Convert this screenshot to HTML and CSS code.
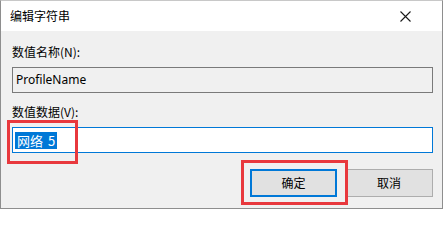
FILE: index.html
```html
<!DOCTYPE html>
<html lang="zh-CN">
<head>
<meta charset="utf-8">
<title>编辑字符串</title>
<link rel="stylesheet" href="styles.css">
</head>
<body>
<div class="window">
  <div class="titlebar">
    <span class="title">编辑字符串</span>
    <span class="close" aria-label="关闭">
      <svg width="11" height="11" viewBox="0 0 11 11"><path d="M0.5 0.5 L10.5 10.5 M10.5 0.5 L0.5 10.5" stroke="#1a1a1a" stroke-width="1.1" fill="none"/></svg>
    </span>
  </div>
  <div class="content">
    <div class="label label-first">数值名称(N):</div>
    <div class="field field-readonly"><span class="value">ProfileName</span></div>
    <div class="label label-second">数值数据(V):</div>
    <div class="field field-focus"><span class="selected">网络&nbsp;5</span></div>
    <div class="buttons">
      <div class="btn btn-default">确定</div>
      <div class="btn">取消</div>
    </div>
  </div>
  <div class="mark mark-field"></div>
  <div class="mark mark-button"></div>
</div>
</body>
</html>
```
FILE: styles.css
```css
html, body {
  margin: 0;
  padding: 0;
  background: #ffffff;
}
body {
  width: 443px;
  height: 211px;
  overflow: hidden;
  font-family: "Noto Sans CJK SC", "Noto Sans", sans-serif;
  font-size: 12px;
  color: #000;
}
.window {
  position: relative;
  box-sizing: border-box;
  width: 443px;
  height: 209px;
  border: 1px solid #8e8e8e;
  border-top-color: #c8c8c8;
  background: #f0f0f0;
  display: flex;
  flex-direction: column;
}
.titlebar {
  height: 30px;
  background: #ffffff;
  display: flex;
  align-items: center;
  justify-content: space-between;
  padding: 0 31px 0 9px;
}
.title {
  font-size: 12px;
  line-height: 16px;
}
.close {
  display: flex;
  width: 11px;
  height: 11px;
}
.content {
  flex: 1;
  display: flex;
  flex-direction: column;
  padding: 0 9px 0 11px;
}
.label {
  line-height: 16px;
  height: 16px;
}
.label-first { margin-top: 13px; }
.label-second { margin-top: 11px; }
.field {
  box-sizing: border-box;
  height: 26px;
  display: flex;
  align-items: center;
  padding: 0 3px;
  font-family: "Noto Sans", "Noto Sans CJK SC", sans-serif;
  font-size: 12px;
}
.field-readonly {
  margin-top: 7px;
  border: 1px solid #7a7a7a;
  background: #f0f0f0;
}
.field-focus {
  margin-top: 7px;
  border: 1px solid #0078d7;
  background: #ffffff;
  padding-left: 2px;
}
.value { line-height: 16px; }
.selected {
  background: #0078d7;
  color: #ffffff;
  line-height: 17px;
  padding: 0 2px 0 2px;
  font-size: 13px;
  word-spacing: 2px;
  font-family: "Noto Sans CJK SC", "Noto Sans", sans-serif;
}
.buttons {
  margin-top: 16px;
  display: flex;
  justify-content: flex-end;
  gap: 8px;
}
.btn {
  box-sizing: border-box;
  width: 88px;
  height: 28px;
  border: 1px solid #adadad;
  background: #e1e1e1;
  display: flex;
  align-items: center;
  justify-content: center;
  line-height: 16px;
}
.btn-default {
  width: 87px;
  border: 2px solid #0078d7;
}
.mark {
  position: absolute;
  box-sizing: border-box;
  border: 3px solid #e8383d;
}
.mark-field {
  left: 6px;
  top: 119px;
  width: 71px;
  height: 44px;
}
.mark-button {
  left: 240px;
  top: 159px;
  width: 107px;
  height: 45px;
}
```
